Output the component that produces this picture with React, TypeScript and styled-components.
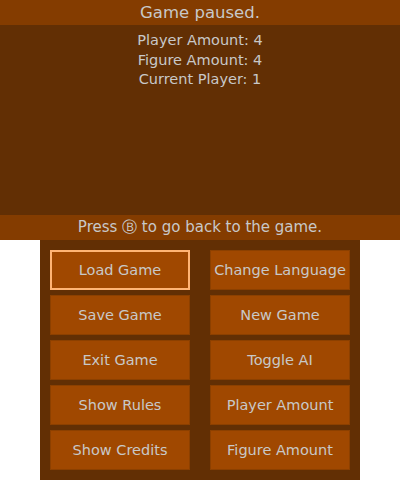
import React from "react";
import styled, { createGlobalStyle } from "styled-components";

const Global = createGlobalStyle`
  html, body { margin: 0; padding: 0; background: #ffffff; }
  body { font-family: "DejaVu Sans", "Noto Sans", sans-serif; }
`;

const Page = styled.div`
  width: 400px;
  height: 480px;
  display: flex;
  flex-direction: column;
`;

const TopScreen = styled.div`
  width: 400px;
  height: 240px;
  display: flex;
  flex-direction: column;
  background: #622f04;
  color: #c8c8c8;
`;

const Bar = styled.div<{ $size: number }>`
  height: 25px;
  flex: none;
  background: #843c00;
  display: flex;
  align-items: center;
  justify-content: center;
  font-size: ${(p) => p.$size}px;
  white-space: nowrap;
`;

const Info = styled.div`
  flex: 1;
  padding-top: 6px;
  display: flex;
  flex-direction: column;
  align-items: center;
  font-size: 14.5px;
  line-height: 19.5px;
`;

const BottomScreen = styled.div`
  width: 320px;
  height: 240px;
  margin: 0 auto;
  box-sizing: border-box;
  background: #622f04;
  padding: 10px;
  display: grid;
  grid-template-columns: 140px 140px;
  grid-auto-rows: 40px;
  column-gap: 20px;
  row-gap: 5px;
`;

const MenuButton = styled.div<{ $selected?: boolean }>`
  box-sizing: border-box;
  background: #a04800;
  border: ${(p) => (p.$selected ? "2px solid #ffb474" : "1px solid #8c4000")};
  display: flex;
  align-items: center;
  justify-content: center;
  color: #c8c8c8;
  font-size: 14.5px;
  white-space: nowrap;
`;

const buttons = [
  "Load Game",
  "Change Language",
  "Save Game",
  "New Game",
  "Exit Game",
  "Toggle AI",
  "Show Rules",
  "Player Amount",
  "Show Credits",
  "Figure Amount",
];

export default function App() {
  return (
    <Page>
      <Global />
      <TopScreen>
        <Bar $size={16.5}>Game paused.</Bar>
        <Info>
          <div>Player Amount: 4</div>
          <div>Figure Amount: 4</div>
          <div>Current Player: 1</div>
        </Info>
        <Bar $size={15}>Press Ⓑ to go back to the game.</Bar>
      </TopScreen>
      <BottomScreen>
        {buttons.map((b, i) => (
          <MenuButton key={b} $selected={i === 0}>
            {b}
          </MenuButton>
        ))}
      </BottomScreen>
    </Page>
  );
}
